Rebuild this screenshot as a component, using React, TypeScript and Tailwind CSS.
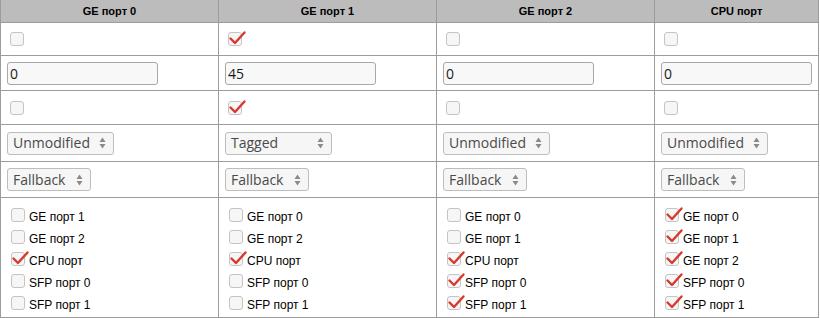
import React from "react"

type Col = {
  title: string
  width: string
  enabled: boolean
  pvid: string
  tagged: boolean
  egress: string
  members: { name: string; on: boolean }[]
}

const cols: Col[] = [
  {
    title: "GE порт 0",
    width: "w-[218px]",
    enabled: false,
    pvid: "0",
    tagged: false,
    egress: "Unmodified",
    members: [
      { name: "GE порт 1", on: false },
      { name: "GE порт 2", on: false },
      { name: "CPU порт", on: true },
      { name: "SFP порт 0", on: false },
      { name: "SFP порт 1", on: false },
    ],
  },
  {
    title: "GE порт 1",
    width: "w-[218px]",
    enabled: true,
    pvid: "45",
    tagged: true,
    egress: "Tagged",
    members: [
      { name: "GE порт 0", on: false },
      { name: "GE порт 2", on: false },
      { name: "CPU порт", on: true },
      { name: "SFP порт 0", on: false },
      { name: "SFP порт 1", on: false },
    ],
  },
  {
    title: "GE порт 2",
    width: "w-[218px]",
    enabled: false,
    pvid: "0",
    tagged: false,
    egress: "Unmodified",
    members: [
      { name: "GE порт 0", on: false },
      { name: "GE порт 1", on: false },
      { name: "CPU порт", on: true },
      { name: "SFP порт 0", on: true },
      { name: "SFP порт 1", on: true },
    ],
  },
  {
    title: "CPU порт",
    width: "w-[164px]",
    enabled: false,
    pvid: "0",
    tagged: false,
    egress: "Unmodified",
    members: [
      { name: "GE порт 0", on: true },
      { name: "GE порт 1", on: true },
      { name: "GE порт 2", on: true },
      { name: "SFP порт 0", on: true },
      { name: "SFP порт 1", on: true },
    ],
  },
]

function Check({ on }: { on: boolean }) {
  return (
    <span className="relative inline-block w-[14px] h-[14px] shrink-0 rounded-[3px] border border-[#c4c4c4] bg-[#f6f6f6]">
      {on && (
        <svg className="absolute left-0 top-[-1px] overflow-visible" width="18" height="14" viewBox="0 0 18 14">
          <path d="M1.5 6.5 L6 11 L15.5 0.5" fill="none" stroke="#d8392c" strokeWidth="2.4" strokeLinecap="round" strokeLinejoin="round" />
        </svg>
      )}
    </span>
  )
}

function Spin() {
  return (
    <svg width="7" height="12" viewBox="0 0 7 12" className="shrink-0">
      <path d="M3.5 0.5 L6.5 5 L0.5 5 Z" fill="#8a8a8a" />
      <path d="M0.5 7 L6.5 7 L3.5 11.5 Z" fill="#8a8a8a" />
    </svg>
  )
}

function Select({ value, w }: { value: string; w: string }) {
  return (
    <div className={`${w} h-[23px] flex items-center justify-between pl-[5px] pr-[7px] rounded-[3px] border border-[#bdbdbd] bg-[#f6f6f6] text-[14px] text-[#4a4a4a] font-['Open_Sans',sans-serif]`}>
      <span className="leading-none">{value}</span>
      <Spin />
    </div>
  )
}

const row = "flex border-b border-[#9c9c9c]"
const cell = "border-r border-[#9c9c9c] flex items-center"

export default function App() {
  return (
    <div className="w-[820px] h-[318px] bg-white font-['Liberation_Sans',Arial,sans-serif] text-black">
      <div className="w-[819px] border-l border-[#9c9c9c]">
        {/* header */}
        <div className={`${row} h-[23px] bg-[#bcbcbc]`}>
          {cols.map((c) => (
            <div key={c.title} className={`${c.width} ${cell} justify-center text-[11px] font-bold`}>
              {c.title}
            </div>
          ))}
        </div>

        {/* enabled */}
        <div className={`${row} h-[33px]`}>
          {cols.map((c) => (
            <div key={c.title} className={`${c.width} ${cell} pl-[9px]`}>
              <Check on={c.enabled} />
            </div>
          ))}
        </div>

        {/* pvid */}
        <div className={`${row} h-[35px]`}>
          {cols.map((c) => (
            <div key={c.title} className={`${c.width} ${cell} pl-[6px]`}>
              <div className="w-[151px] h-[23px] flex items-center px-[2px] rounded-[3px] border border-[#a8a8a8] bg-[#f8f8f8] text-[14px] text-[#1a1a1a] font-['Open_Sans',sans-serif]">
                {c.pvid}
              </div>
            </div>
          ))}
        </div>

        {/* tagged */}
        <div className={`${row} h-[34px]`}>
          {cols.map((c) => (
            <div key={c.title} className={`${c.width} ${cell} pl-[9px]`}>
              <Check on={c.tagged} />
            </div>
          ))}
        </div>

        {/* egress */}
        <div className={`${row} h-[37px]`}>
          {cols.map((c) => (
            <div key={c.title} className={`${c.width} ${cell} pl-[6px]`}>
              <Select value={c.egress} w="w-[107px]" />
            </div>
          ))}
        </div>

        {/* mode */}
        <div className={`${row} h-[36px]`}>
          {cols.map((c) => (
            <div key={c.title} className={`${c.width} ${cell} pl-[6px]`}>
              <Select value="Fallback" w="w-[84px]" />
            </div>
          ))}
        </div>

        {/* members */}
        <div className={`${row} h-[120px]`}>
          {cols.map((c) => (
            <div key={c.title} className={`${c.width} border-r border-[#9c9c9c] pl-[10px] pt-[10px] flex flex-col gap-[8px]`}>
              {c.members.map((m) => (
                <div key={m.name} className="flex items-center gap-[4px] h-[14px] text-[12px]">
                  <Check on={m.on} />
                  <span className="pt-[4px]">{m.name}</span>
                </div>
              ))}
            </div>
          ))}
        </div>
      </div>
    </div>
  )
}
